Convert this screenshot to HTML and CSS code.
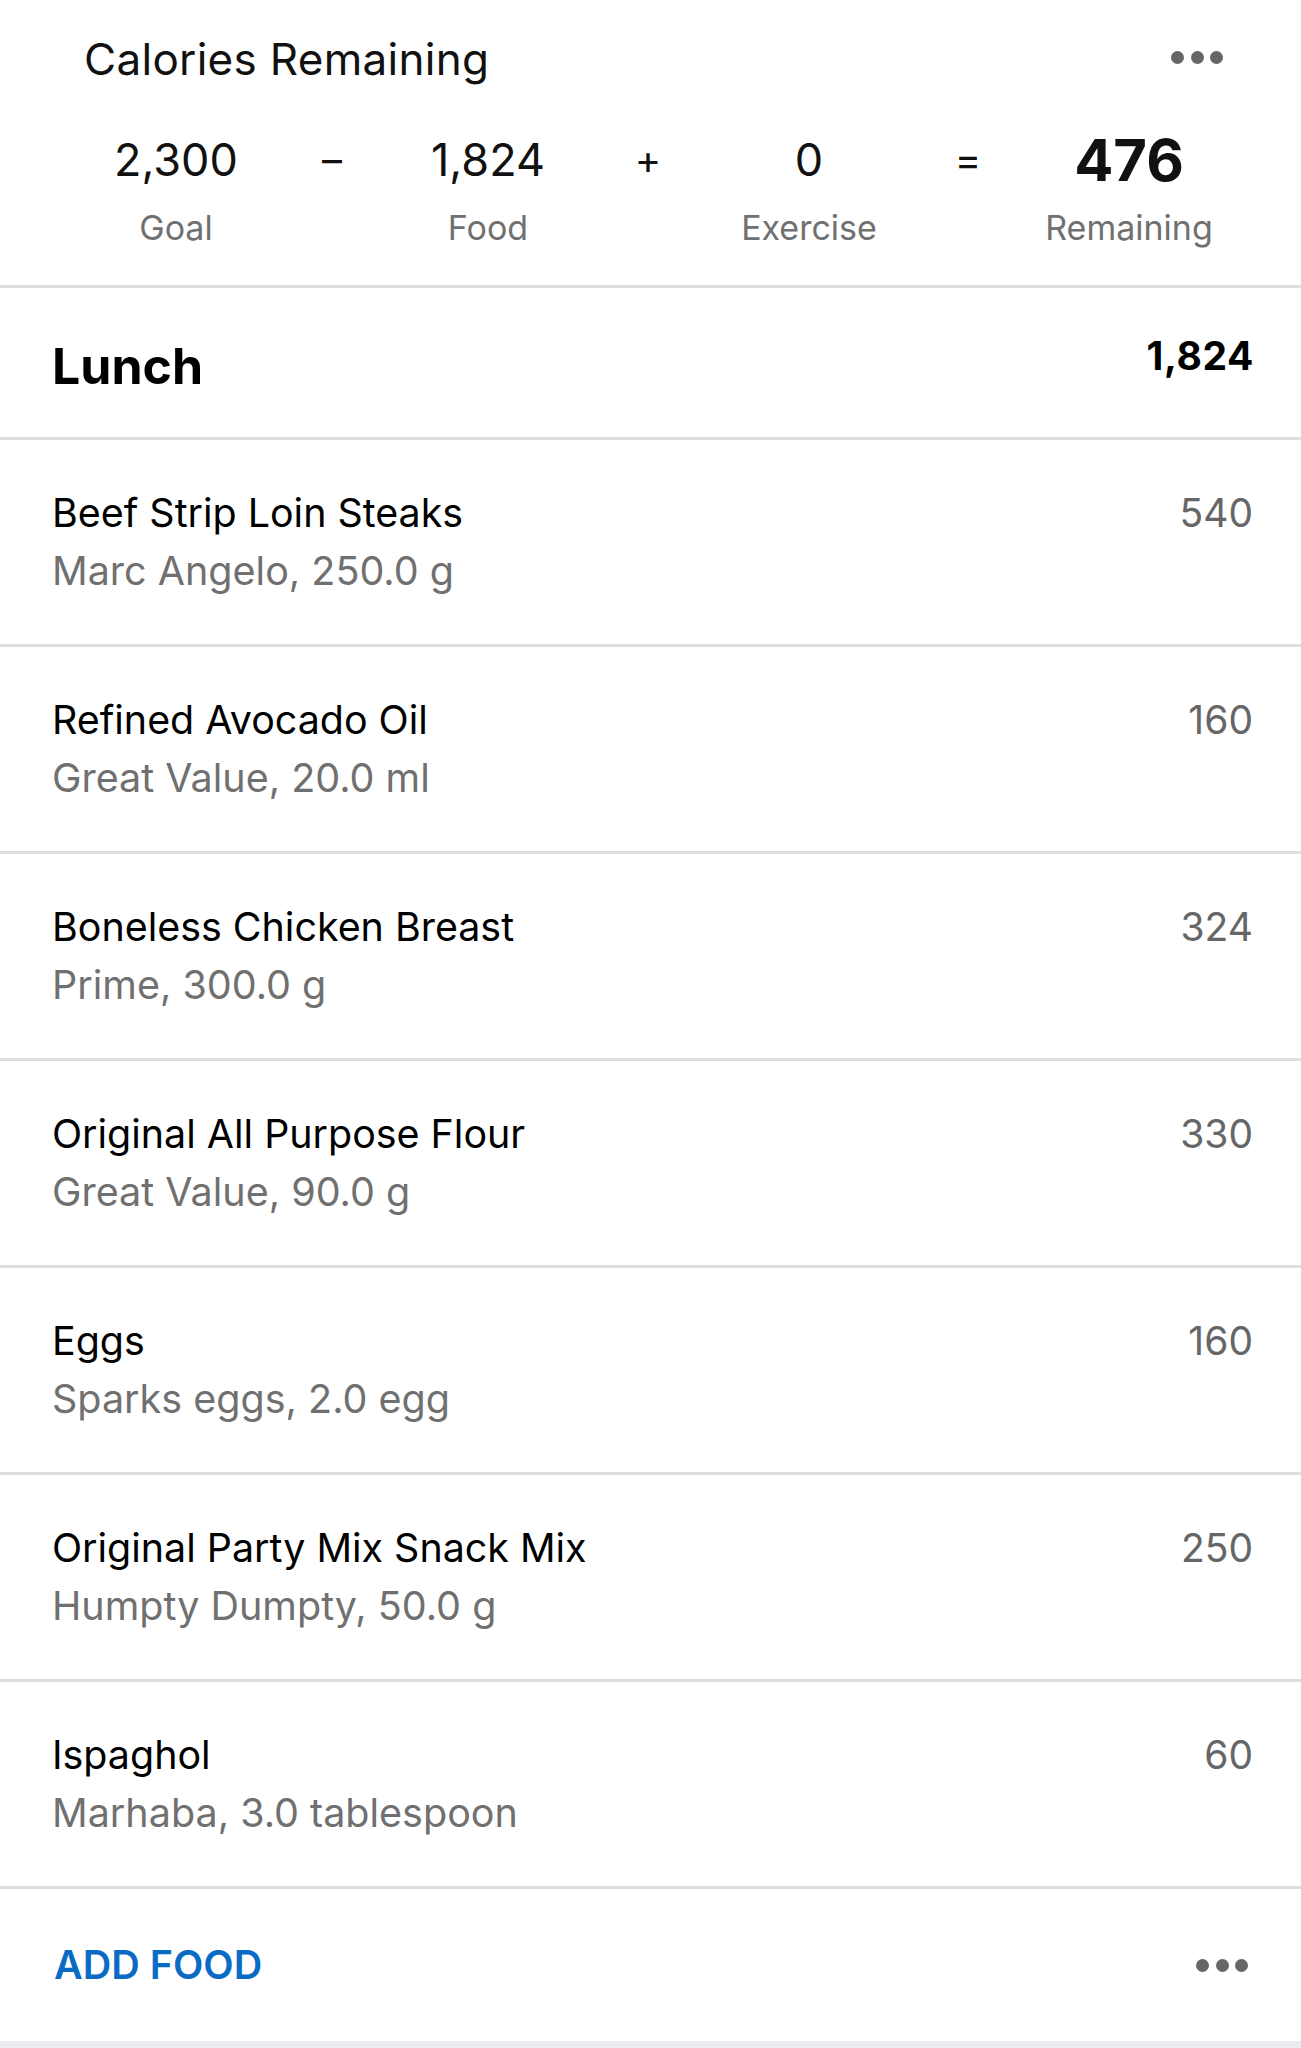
FILE: index.html
```html
<!DOCTYPE html>
<html>
<head>
<meta charset="utf-8">
<link rel="stylesheet" href="styles.css">
</head>
<body>
<div class="page">
  <section class="summary">
    <div class="summary-head">
      <h1 class="summary-title">Calories Remaining</h1>
      <div class="dots dots-top"><span></span><span></span><span></span></div>
    </div>
    <div class="stats">
      <div class="stat"><div class="val">2,300</div><div class="lbl">Goal</div></div>
      <div class="stat"><div class="val op">–</div></div>
      <div class="stat"><div class="val">1,824</div><div class="lbl">Food</div></div>
      <div class="stat"><div class="val op">+</div></div>
      <div class="stat"><div class="val">0</div><div class="lbl">Exercise</div></div>
      <div class="stat"><div class="val op">=</div></div>
      <div class="stat"><div class="val big">476</div><div class="lbl">Remaining</div></div>
    </div>
  </section>

  <section class="meal">
    <div class="meal-head">
      <h2 class="meal-title">Lunch</h2>
      <div class="meal-total">1,824</div>
    </div>
    <div class="food">
      <div class="food-text"><div class="food-name">Beef Strip Loin Steaks</div><div class="food-sub">Marc Angelo, 250.0 g</div></div>
      <div class="food-cal">540</div>
    </div>
    <div class="food">
      <div class="food-text"><div class="food-name">Refined Avocado Oil</div><div class="food-sub">Great Value, 20.0 ml</div></div>
      <div class="food-cal">160</div>
    </div>
    <div class="food">
      <div class="food-text"><div class="food-name">Boneless Chicken Breast</div><div class="food-sub">Prime, 300.0 g</div></div>
      <div class="food-cal">324</div>
    </div>
    <div class="food">
      <div class="food-text"><div class="food-name">Original All Purpose Flour</div><div class="food-sub">Great Value, 90.0 g</div></div>
      <div class="food-cal">330</div>
    </div>
    <div class="food">
      <div class="food-text"><div class="food-name">Eggs</div><div class="food-sub">Sparks eggs, 2.0 egg</div></div>
      <div class="food-cal">160</div>
    </div>
    <div class="food">
      <div class="food-text"><div class="food-name">Original Party Mix Snack Mix</div><div class="food-sub">Humpty Dumpty, 50.0 g</div></div>
      <div class="food-cal">250</div>
    </div>
    <div class="food">
      <div class="food-text"><div class="food-name">Ispaghol</div><div class="food-sub">Marhaba, 3.0 tablespoon</div></div>
      <div class="food-cal">60</div>
    </div>
    <div class="meal-foot">
      <span class="add-food">ADD FOOD</span>
      <div class="dots dots-foot"><span></span><span></span><span></span></div>
    </div>
  </section>
  <div class="bottom-fill"></div>
</div>
</body>
</html>
```

FILE: styles.css
```css
* { box-sizing: border-box; }
html, body { margin: 0; padding: 0; background: #ffffff; }
body { font-family: Inter, "Noto Sans", sans-serif; color: #000; }

.page { width: 1301px; }

.summary {
  padding-top: 33px;
  height: 288px;
  border-bottom: 3px solid #dedede;
}
.summary-head {
  display: flex;
  align-items: center;
  justify-content: space-between;
  padding-left: 84px;
  padding-right: 78px;
}
.summary-title {
  margin: 0;
  font-size: 44px;
  font-weight: 400;
  line-height: 52px;
  letter-spacing: 0.3px;
  color: #111;
}

.dots { display: flex; gap: 6.5px; }
.dots span {
  display: block;
  width: 13px;
  height: 13px;
  border-radius: 50%;
  background: #666;
}
.dots-top { margin-top: -4px; }

.stats {
  display: grid;
  grid-template-columns: 156px 156px 156px 164px 158px 160px 162px;
  margin-left: 98px;
  margin-top: 43px;
}
.stat { display: flex; flex-direction: column; align-items: center; }
.val {
  height: 64px;
  font-size: 45px;
  line-height: 64px;
  color: #111;
}
.val.op { font-size: 40px; }
.val.big { font-size: 58px; line-height: 58px; font-weight: 700; margin-top: 3px; height: 61px; }
.lbl {
  margin-top: 16px;
  font-size: 34px;
  line-height: 40px;
  color: #707070;
}

.meal-head {
  display: flex;
  justify-content: space-between;
  align-items: flex-start;
  height: 152px;
  padding: 48px 47px 0 52px;
  border-bottom: 3px solid #dedede;
}
.meal-title {
  margin: 0;
  font-size: 50px;
  line-height: 60px;
  font-weight: 700;
}
.meal-total {
  font-size: 39px;
  line-height: 42px;
  font-weight: 700;
  letter-spacing: 0.6px;
  margin-top: -1px;
}

.food {
  display: flex;
  justify-content: space-between;
  align-items: flex-start;
  height: 207px;
  padding: 44px 48px 0 52px;
  border-bottom: 3px solid #dedede;
}
.food-name {
  font-size: 39.4px;
  line-height: 58px;
  color: #000;
}
.food-sub {
  font-size: 39.5px;
  line-height: 58px;
  color: #707070;
}
.food-cal {
  font-size: 39px;
  line-height: 58px;
  color: #666;
}

.meal-foot {
  display: flex;
  justify-content: space-between;
  align-items: center;
  height: 152px;
  padding: 0 53px 0 54px;
}
.add-food {
  font-size: 39.5px;
  font-weight: 600;
  color: #0a6bc5;
  line-height: 50px;
}
.bottom-fill { height: 20px; background: #ececf0; }
```
